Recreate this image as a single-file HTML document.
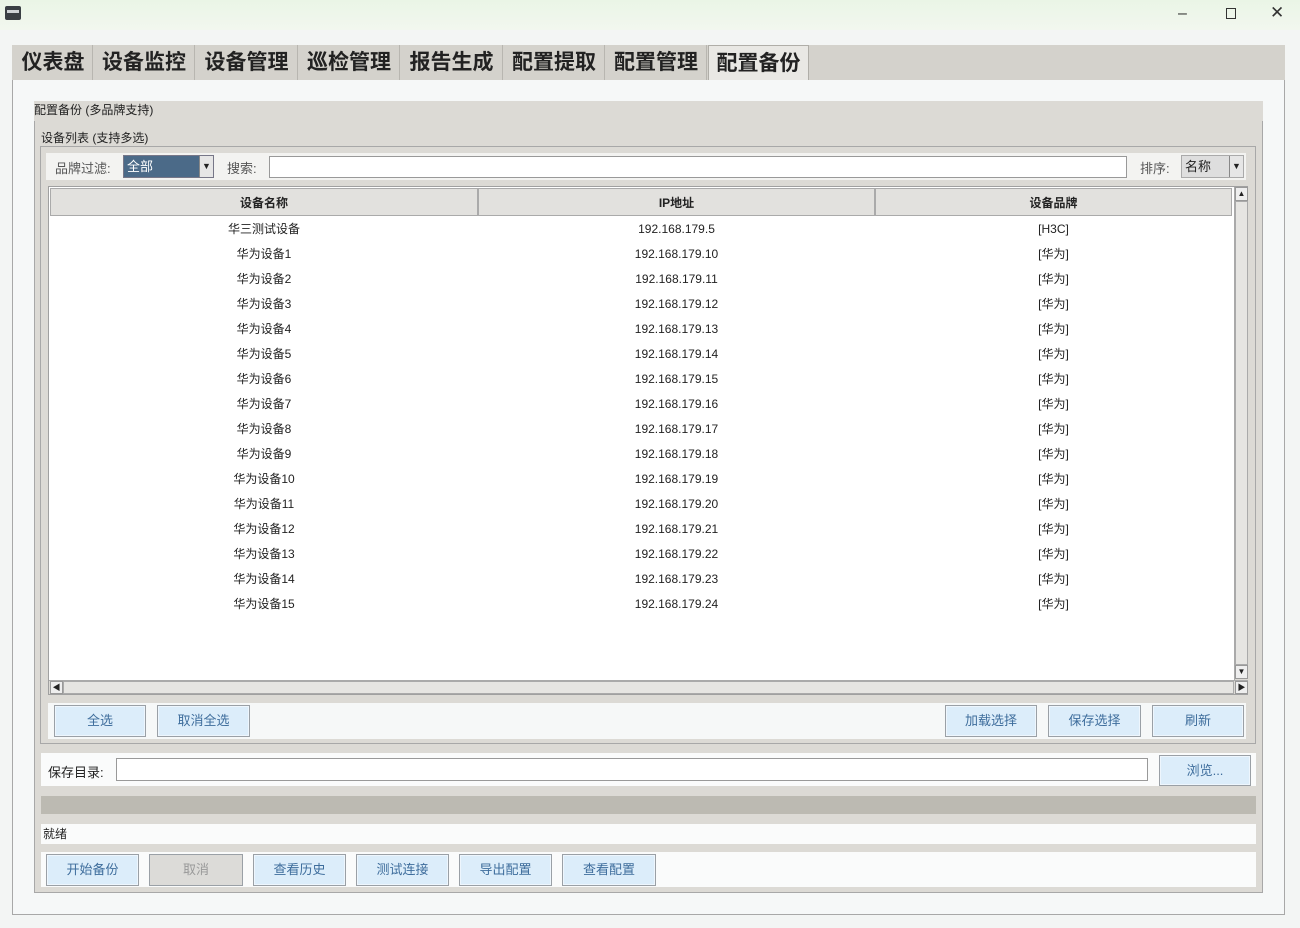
<!DOCTYPE html>
<html><head><meta charset="utf-8"><style>
*{box-sizing:border-box;margin:0;padding:0}
body{width:1300px;height:928px;background:#f3f5f4;font-family:"Liberation Sans","Noto Sans CJK SC",sans-serif;font-size:12px;color:#222;position:relative;overflow:hidden}
.a{position:absolute}
.tab{position:absolute;top:45px;height:35px;background:#d4d2cc;border-right:1px solid #b8b6b0;font-weight:bold;font-size:21px;line-height:35px;text-align:center;color:#222}
.btn{position:absolute;height:32px;background:#dcedfa;border:1px solid #9aa0a6;color:#3e6d9c;font-size:13px;text-align:center;line-height:30px;box-shadow:inset 0 0 0 1px #eef6fd}
.row{position:absolute;left:50px;width:1182px;height:25px;line-height:25px;font-size:12px}
.row span{position:absolute;text-align:center}
</style></head><body>
<div class="a" style="left:0;top:0;width:1300px;height:30px;background:linear-gradient(#eaf5e6,#f2f7ef)"></div>
<div class="a" style="left:5px;top:6px;width:16px;height:14px;background:#3a3f44;border-radius:2px"></div>
<div class="a" style="left:7px;top:10px;width:12px;height:3px;background:#cfd3d6"></div>
<div class="a" style="left:1178px;top:5px;font-size:16px;color:#333">–</div>
<div class="a" style="left:1226px;top:8px;width:10px;height:11px;border:1px solid #333"></div>
<div class="a" style="left:1270px;top:3px;font-size:17px;color:#333">✕</div>

<div class="a" style="left:12px;top:45px;width:1273px;height:35px;background:#d4d2cc"></div>
<div class="tab" style="left:14px;width:79px">仪表盘</div>
<div class="tab" style="left:94px;width:101px">设备监控</div>
<div class="tab" style="left:196px;width:102px">设备管理</div>
<div class="tab" style="left:299px;width:101px">巡检管理</div>
<div class="tab" style="left:401px;width:102px">报告生成</div>
<div class="tab" style="left:504px;width:101px">配置提取</div>
<div class="tab" style="left:606px;width:101px">配置管理</div>
<div class="tab" style="left:708px;width:101px;background:#e9e8e4;border:1px solid #b0aea8;border-bottom:none">配置备份</div>

<div class="a" style="left:12px;top:80px;width:1273px;height:835px;background:#f6f8f8;border:1px solid #a8a8a8;border-top:none"></div>
<div class="a" style="left:34px;top:101px;width:1229px;height:20px;background:#dcdad5;line-height:18px;font-size:12px">配置备份 (多品牌支持)</div>
<div class="a" style="left:34px;top:121px;width:1229px;height:772px;background:#dcdad5;border:1px solid #a8a8a8;border-top:none"></div>
<div class="a" style="left:41px;top:129px;font-size:12px">设备列表 (支持多选)</div>
<div class="a" style="left:40px;top:146px;width:1216px;height:598px;border:1px solid #a8a8a8"></div>
<div class="a" style="left:46px;top:153px;width:1200px;height:27px;background:#f3f3f1"></div>
<div class="a" style="left:55px;top:158px;font-size:13px;color:#555">品牌过滤:</div>
<div class="a" style="left:123px;top:155px;width:91px;height:23px;background:#4b6a88;border:1px solid #778;color:#fff;font-size:13px;line-height:21px;padding-left:3px">全部</div>
<div class="a" style="left:199px;top:156px;width:14px;height:21px;background:#e6e6e6;border-left:1px solid #888;font-size:9px;text-align:center;line-height:21px">▼</div>
<div class="a" style="left:227px;top:158px;font-size:13px;color:#555">搜索:</div>
<div class="a" style="left:269px;top:156px;width:858px;height:22px;background:#fff;border:1px solid #999"></div>
<div class="a" style="left:1140px;top:158px;font-size:13px;color:#555">排序:</div>
<div class="a" style="left:1181px;top:155px;width:63px;height:23px;background:#dedede;border:1px solid #aaa;font-size:13px;line-height:21px;padding-left:3px">名称</div>
<div class="a" style="left:1229px;top:156px;width:14px;height:21px;background:#e6e6e6;border-left:1px solid #888;font-size:9px;text-align:center;line-height:21px">▼</div>

<div class="a" style="left:48px;top:186px;width:1200px;height:509px;background:#fff;border:1px solid #a0a0a0"></div>
<div class="a" style="left:50px;top:188px;width:428px;height:28px;background:#e2e1de;border:1px solid #aaa;font-weight:bold;text-align:center;line-height:28px">设备名称</div>
<div class="a" style="left:478px;top:188px;width:397px;height:28px;background:#e2e1de;border:1px solid #aaa;font-weight:bold;text-align:center;line-height:28px">IP地址</div>
<div class="a" style="left:875px;top:188px;width:357px;height:28px;background:#e2e1de;border:1px solid #aaa;font-weight:bold;text-align:center;line-height:28px">设备品牌</div>
<div class="a" style="left:1234px;top:187px;width:14px;height:493px;background:#dcdad5;border-left:1px solid #aaa"></div>
<div class="a" style="left:1235px;top:187px;width:13px;height:14px;background:#eee;border:1px solid #999;font-size:8px;text-align:center;line-height:12px">▲</div>
<div class="a" style="left:1235px;top:201px;width:13px;height:464px;background:#e6e5e2;border:1px solid #aaa"></div>
<div class="a" style="left:1235px;top:665px;width:13px;height:14px;background:#eee;border:1px solid #999;font-size:8px;text-align:center;line-height:12px">▼</div>
<div class="a" style="left:49px;top:680px;width:1199px;height:14px;background:#dcdad5;border-top:1px solid #aaa"></div>
<div class="a" style="left:50px;top:681px;width:13px;height:13px;background:#eee;border:1px solid #999;font-size:8px;text-align:center;line-height:11px">◀</div>
<div class="a" style="left:63px;top:681px;width:1171px;height:13px;background:#e6e5e2;border:1px solid #aaa"></div>
<div class="a" style="left:1235px;top:681px;width:13px;height:13px;background:#eee;border:1px solid #999;font-size:8px;text-align:center;line-height:11px">▶</div>

<div id="rows"></div>

<div class="a" style="left:48px;top:703px;width:1198px;height:36px;background:#f6f8f8"></div>
<div class="btn" style="left:54px;top:705px;width:92px">全选</div>
<div class="btn" style="left:157px;top:705px;width:93px">取消全选</div>
<div class="btn" style="left:945px;top:705px;width:92px">加载选择</div>
<div class="btn" style="left:1048px;top:705px;width:93px">保存选择</div>
<div class="btn" style="left:1152px;top:705px;width:92px">刷新</div>

<div class="a" style="left:41px;top:753px;width:1215px;height:33px;background:#fafbfb"></div>
<div class="a" style="left:48px;top:762px;font-size:13px">保存目录:</div>
<div class="a" style="left:116px;top:758px;width:1032px;height:23px;background:#fff;border:1px solid #999"></div>
<div class="btn" style="left:1159px;top:755px;width:92px;height:31px">浏览...</div>
<div class="a" style="left:41px;top:796px;width:1215px;height:18px;background:#bcbab2"></div>
<div class="a" style="left:41px;top:824px;width:1215px;height:20px;background:#fafbfb;line-height:20px;padding-left:2px">就绪</div>
<div class="a" style="left:41px;top:852px;width:1215px;height:35px;background:#fafbfb"></div>
<div class="btn" style="left:46px;top:854px;width:93px">开始备份</div>
<div class="btn" style="left:149px;top:854px;width:94px;background:#dcdbd8;color:#999;box-shadow:none">取消</div>
<div class="btn" style="left:253px;top:854px;width:93px">查看历史</div>
<div class="btn" style="left:356px;top:854px;width:93px">测试连接</div>
<div class="btn" style="left:459px;top:854px;width:93px">导出配置</div>
<div class="btn" style="left:562px;top:854px;width:94px">查看配置</div>
<script>
var h='',d=[['华三测试设备','192.168.179.5','[H3C]']];
for(var i=1;i<=15;i++)d.push(['华为设备'+i,'192.168.179.'+(9+i),'[华为]']);
d.forEach(function(r,i){h+='<div class="row" style="top:'+(217+i*25)+'px"><span style="left:0;width:428px">'+r[0]+'</span><span style="left:428px;width:397px">'+r[1]+'</span><span style="left:825px;width:357px">'+r[2]+'</span></div>';});
document.getElementById('rows').innerHTML=h;
</script>
</body></html>
